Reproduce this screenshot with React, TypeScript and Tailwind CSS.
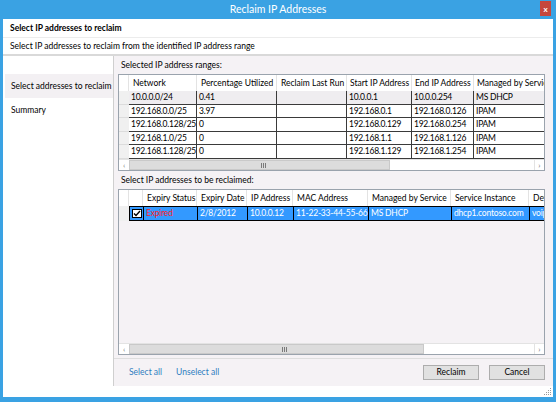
import React from "react";

const topCols = [
  { w: "w-[68px]", pad: "pl-[4px]", label: "Network" },
  { w: "w-[80px]", pad: "pl-[4px]", label: "Percentage Utilized" },
  { w: "w-[70px]", pad: "pl-[4px]", label: "Reclaim Last Run" },
  { w: "w-[65px]", pad: "pl-[3px]", label: "Start IP Address" },
  { w: "w-[62px]", pad: "pl-[3px]", label: "End IP Address" },
  { w: "w-[80px]", pad: "pl-[3px]", label: "Managed by Service" },
];

const topRows = [
  { h: "h-[14px]", cells: ["10.0.0.0/24", "0.41", "", "10.0.0.1", "10.0.0.254", "MS DHCP"] },
  { h: "h-[13px]", cells: ["192.168.0.0/25", "3.97", "", "192.168.0.1", "192.168.0.126", "IPAM"] },
  { h: "h-[14px]", cells: ["192.168.0.128/25", "0", "", "192.168.0.129", "192.168.0.254", "IPAM"] },
  { h: "h-[13px]", cells: ["192.168.1.0/25", "0", "", "192.168.1.1", "192.168.1.126", "IPAM"] },
  { h: "h-[14px]", cells: ["192.168.1.128/25", "0", "", "192.168.1.129", "192.168.1.254", "IPAM"] },
];

const bottomCols = [
  { w: "w-[54px]", label: "Expiry Status" },
  { w: "w-[50px]", label: "Expiry Date" },
  { w: "w-[46px]", label: "IP Address" },
  { w: "w-[75px]", label: "MAC Address" },
  { w: "w-[83px]", label: "Managed by Service" },
  { w: "w-[78px]", label: "Service Instance" },
  { w: "w-[60px]", label: "Device Type" },
];

const bottomRow = ["Expired", "2/8/2012", "10.0.0.12", "11-22-33-44-55-66", "MS DHCP", "dhcp1.contoso.com", "voip"];

function ScrollBar({ thumb, grip }: { thumb: string; grip: string }) {
  return (
    <div className="flex h-[11px] shrink-0 border-t border-[#e3e3e3] bg-white">
      <div className="flex w-[10px] shrink-0 items-center justify-center text-[8px] leading-none text-[#7a7a7a]">‹</div>
      <div className={`${thumb} relative shrink-0 border border-[#c9c9c9] bg-[#dcdcdc]`}>
        <div className={`absolute top-[2px] ${grip} flex gap-[1px]`}>
          <span className="h-[5px] w-px bg-[#7a7a7a]" />
          <span className="h-[5px] w-px bg-[#7a7a7a]" />
          <span className="h-[5px] w-px bg-[#7a7a7a]" />
        </div>
      </div>
      <div className="min-w-0 flex-1" />
      <div className="flex w-[10px] shrink-0 items-center justify-center border-l border-[#e3e3e3] text-[8px] leading-none text-[#7a7a7a]">›</div>
    </div>
  );
}

function TopTable() {
  return (
    <div className="flex h-[97px] min-w-0 flex-col overflow-hidden border border-[#9aa3ad] bg-white">
      <div className="flex h-[16px] shrink-0">
        <div className="w-[10px] shrink-0 border-r border-[#e3e3e3]" />
        {topCols.map((c) => (
          <div
            key={c.label}
            className={`${c.w} ${c.pad} flex shrink-0 items-center overflow-hidden whitespace-nowrap border-r border-[#e3e3e3]`}
          >
            {c.label}
          </div>
        ))}
      </div>
      {topRows.map((r, i) => (
        <div key={r.cells[0]} className={`flex ${r.h} shrink-0`}>
          <div className="w-[10px] shrink-0 border-b border-[#dcdcdc] bg-[#f0f0f0]" />
          {r.cells.map((cell, j) => (
            <div
              key={j}
              className={`${topCols[j].w} flex shrink-0 items-center overflow-hidden whitespace-nowrap border-b border-r border-[#3a3a3a] pl-[2px] tracking-[-0.25px] ${
                i === 0 ? "bg-[#efedf0]" : "bg-white"
              }`}
            >
              {cell}
            </div>
          ))}
        </div>
      ))}
      <div className="flex-1 bg-white" />
      <ScrollBar thumb="w-[261px]" grip="left-[131px]" />
    </div>
  );
}

function BottomTable() {
  return (
    <div className="flex h-[166px] min-w-0 flex-col overflow-hidden border border-[#9aa3ad] bg-[#f5f2f5]">
      <div className="flex h-[16px] shrink-0 bg-white">
        <div className="w-[10px] shrink-0 border-r border-[#e3e3e3]" />
        <div className="w-[14px] shrink-0 border-r border-[#e3e3e3]" />
        {bottomCols.map((c) => (
          <div
            key={c.label}
            className={`${c.w} flex shrink-0 items-center overflow-hidden whitespace-nowrap border-r border-[#e3e3e3] pl-[4px]`}
          >
            {c.label}
          </div>
        ))}
      </div>
      <div className="flex h-[15px] shrink-0">
        <div className="w-[10px] shrink-0 bg-[#f0f0f0]" />
        <div className="flex w-[14px] shrink-0 items-center justify-center border border-r-0 border-black bg-[#3399ff]">
          <div className="flex h-[9px] w-[10px] items-center justify-center border border-black bg-white">
            <svg width="8" height="7" viewBox="0 0 8 7">
              <path d="M1 3.5 L3 5.5 L7 1" stroke="black" strokeWidth="1.4" fill="none" />
            </svg>
          </div>
        </div>
        {bottomRow.map((cell, j) => (
          <div
            key={j}
            className={`${bottomCols[j].w} flex shrink-0 items-center overflow-hidden whitespace-nowrap border-y border-l border-black bg-[#3399ff] pl-[2px] tracking-[-0.2px] ${
              j === 0 ? "text-[#ff1a1a]" : "text-white"
            }`}
          >
            {cell}
          </div>
        ))}
      </div>
      <div className="flex-1" />
      <ScrollBar thumb="w-[295px]" grip="left-[152px]" />
    </div>
  );
}

export default function App() {
  return (
    <div className="flex h-[402px] w-[556px] flex-col overflow-hidden bg-[#3aa2e3] font-['Lato',sans-serif] text-[8.5px] text-black">
      {/* title bar */}
      <div className="relative flex h-[19px] shrink-0 items-center justify-center text-[10.5px] text-white">
        Reclaim IP Addresses
        <div className="absolute right-[5px] top-[1px] flex h-[15px] w-[11px] items-center justify-center bg-[#c6473d] text-[8px] font-bold leading-none text-white">
          x
        </div>
      </div>

      <div className="mb-[5px] ml-[3px] mr-[3px] flex min-w-0 flex-1 flex-col bg-white">
        {/* header */}
        <div className="flex h-[19px] shrink-0 items-center border-b border-[#ececec] pl-[7px] font-bold">
          Select IP addresses to reclaim
        </div>
        <div className="flex h-[18px] shrink-0 items-center border-b-2 border-[#d9d9d9] pl-[7px]">
          Select IP addresses to reclaim from the identified IP address range
        </div>

        {/* body */}
        <div className="flex h-[330px] shrink-0">
          <div className="flex w-[111px] shrink-0 flex-col border-r border-[#cfcfcf] pt-[18px]">
            <div className="ml-[2px] flex h-[24px] items-center bg-[#f3f0f3] pl-[6px]">Select addresses to reclaim</div>
            <div className="ml-[2px] flex h-[24px] items-center pl-[6px]">Summary</div>
          </div>

          <div className="flex min-w-0 flex-1 flex-col bg-[#f5f2f5]">
            <div className="flex flex-col pl-[4px] pr-[8px]">
              <div className="flex h-[18px] items-center pl-[3px]">Selected IP address ranges:</div>
              <TopTable />
              <div className="flex h-[18px] items-center pl-[3px]">Select IP addresses to be reclaimed:</div>
              <BottomTable />
            </div>
            <div className="mt-[3px] flex flex-1 items-center border-t border-[#dedede] pl-[15px] pr-[8px]">
              <a className="text-[#2d7cc0]">Select all</a>
              <a className="ml-[14px] text-[#2d7cc0]">Unselect all</a>
              <div className="ml-auto flex gap-[10px]">
                <button className="h-[15px] w-[56px] border border-[#adadad] bg-[#e1e1e1] leading-none">Reclaim</button>
                <button className="h-[15px] w-[56px] border border-[#adadad] bg-[#e1e1e1] leading-none">Cancel</button>
              </div>
            </div>
          </div>
        </div>

        {/* status strip with resize grip */}
        <div className="flex flex-1 items-end justify-end pb-[1px] pr-[1px]">
          <svg width="8" height="8" viewBox="0 0 8 8">
            <g fill="#9a9a9a">
              <rect x="6" y="0" width="1" height="1" />
              <rect x="4" y="2" width="1" height="1" />
              <rect x="6" y="2" width="1" height="1" />
              <rect x="2" y="4" width="1" height="1" />
              <rect x="4" y="4" width="1" height="1" />
              <rect x="6" y="4" width="1" height="1" />
              <rect x="0" y="6" width="1" height="1" />
              <rect x="2" y="6" width="1" height="1" />
              <rect x="4" y="6" width="1" height="1" />
              <rect x="6" y="6" width="1" height="1" />
            </g>
          </svg>
        </div>
      </div>
    </div>
  );
}
